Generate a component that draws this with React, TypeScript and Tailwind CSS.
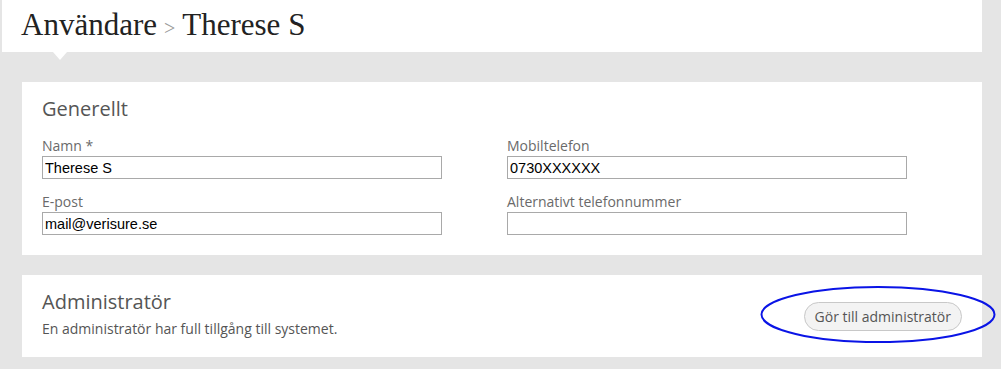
const sans = "font-['Open_Sans','Noto_Sans',sans-serif]";
const arial = "font-['Liberation_Sans',Arial,sans-serif]";

function Field({ label, value }: { label: string; value: string }) {
  return (
    <div>
      <label className={`block text-[14px] leading-[20px] text-[#6a6a6a] ${sans}`}>
        {label}
      </label>
      <input
        readOnly
        value={value}
        className={`block w-[400px] h-[23px] border border-[#a9a9a9] bg-white px-[2px] text-[14.5px] text-black outline-none ${arial}`}
      />
    </div>
  );
}

export default function App() {
  return (
    <div className="h-[369px] w-full bg-[#e5e5e5] overflow-hidden">
      <div className="ml-[2px] w-[980px]">
        <div className="relative h-[52px] bg-white pl-[19px] pt-[7px]">
          <h1 className="font-['Liberation_Serif','Times_New_Roman',serif] text-[31px] leading-[36px] text-[#222]">
            Användare
            <span className="mx-[7px] text-[20px] text-[#999]">&gt;</span>
            Therese S
          </h1>
          <div className="absolute left-[51px] top-full h-0 w-0 border-l-[7px] border-r-[7px] border-t-[8px] border-l-transparent border-r-transparent border-t-white" />
        </div>

        <div className="ml-[20px] mt-[30px]">
          <section className="bg-white px-[20px] pt-[14px] pb-[20px]">
            <h2 className={`text-[20px] leading-[26px] text-[#555] ${sans}`}>Generellt</h2>
            <div className="mt-[14px] grid grid-cols-[400px_400px] gap-x-[65px] gap-y-[13px]">
              <Field label="Namn *" value="Therese S" />
              <Field label="Mobiltelefon" value="0730XXXXXX" />
              <Field label="E-post" value="mail@verisure.se" />
              <Field label="Alternativt telefonnummer" value="" />
            </div>
          </section>

          <section className="relative mt-[20px] flex h-[82px] items-center justify-between bg-white pl-[20px] pr-[20px]">
            <div className="self-start pt-[14px]">
              <h2 className={`text-[20px] leading-[26px] text-[#555] ${sans}`}>Administratör</h2>
              <p className={`mt-[4px] text-[14px] leading-[20px] text-[#555] ${sans}`}>
                En administratör har full tillgång till systemet.
              </p>
            </div>
            <button
              className={`h-[29px] rounded-full border border-[#c8c8c8] bg-[#f3f3f3] px-[10px] text-[14px] text-[#555] ${sans}`}
            >
              Gör till administratör
            </button>
            <svg
              className="pointer-events-none absolute left-[738px] top-[10px] overflow-visible"
              width="236"
              height="59"
              viewBox="0 0 236 59"
            >
              <ellipse cx="118" cy="29.5" rx="116.5" ry="27.5" fill="none" stroke="#0a14e6" strokeWidth="2" />
            </svg>
          </section>
        </div>
      </div>
    </div>
  );
}
